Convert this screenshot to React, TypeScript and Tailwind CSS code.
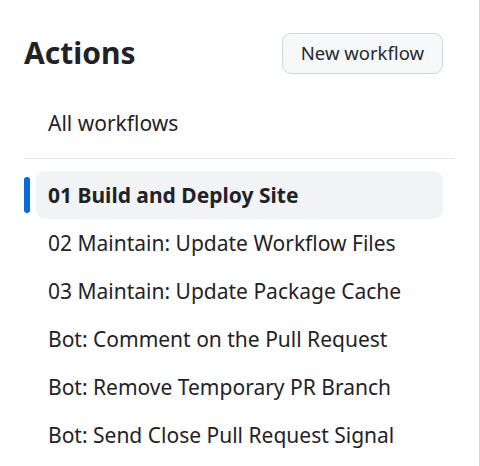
import React from "react";

const items = [
  "02 Maintain: Update Workflow Files",
  "03 Maintain: Update Package Cache",
  "Bot: Comment on the Pull Request",
  "Bot: Remove Temporary PR Branch",
  "Bot: Send Close Pull Request Signal",
];

export default function App() {
  return (
    <div
      className="w-[480px] h-[466px] bg-white border-r border-[#d1d9e0] px-[24px] pt-[32px] text-[#1f2328] overflow-hidden"
      style={{ fontFamily: '"Noto Sans", "Open Sans", sans-serif' }}
    >
      <div className="flex items-center justify-between pr-[12px] h-[42px]">
        <h1 className="text-[30px] font-bold leading-[42px]">Actions</h1>
        <button className="h-[41px] px-[18px] rounded-[9px] border border-[#d1d9e0] bg-[#f6f8fa] text-[18.5px] leading-none text-[#25292e]">
          New workflow
        </button>
      </div>
      <div className="mt-[25px] h-[48px] flex items-center px-[24px] text-[21px] pt-[1px]">
        All workflows
      </div>
      <div className="mt-[11px] h-px bg-[#e3e6ea]" />
      <div className="mt-[12px] flex flex-col">
        <div className="relative mx-[12px] h-[48px] flex items-center px-[12px] pt-[1px] rounded-[9px] bg-[#f2f3f5] text-[21px] font-bold">
          <span className="absolute left-[-12px] top-[6px] w-[6px] h-[36px] rounded-[4px] bg-[#0969da]" />
          01 Build and Deploy Site
        </div>
        {items.map((t) => (
          <div key={t} className="mx-[12px] h-[48px] flex items-center px-[12px] pt-[1px] text-[21px]">
            {t}
          </div>
        ))}
      </div>
    </div>
  );
}
